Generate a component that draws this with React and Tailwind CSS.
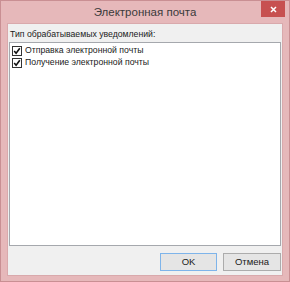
import React from "react";

function Check() {
  return (
    <span className="w-[10px] h-[10px] border border-[#333] bg-white flex items-center justify-center shrink-0">
      <svg width="8" height="8" viewBox="0 0 8 8">
        <path d="M1.2 4 L3.1 6.2 L6.8 1.3" fill="none" stroke="#111" strokeWidth="1.6" />
      </svg>
    </span>
  );
}

export default function App() {
  const items = ["Отправка электронной почты", "Получение электронной почты"];

  return (
    <div
      className="w-[290px] h-[282px] bg-[#e6b8ba] border border-[#c98f93] flex flex-col text-[#1a1a1a]"
      style={{ fontFamily: "'Liberation Sans', Arial, sans-serif" }}
    >
      {/* title bar */}
      <div className="h-[22px] relative flex items-center justify-center">
        <span className="text-[11.5px] text-[#3a3a3a] mt-[1px]">Электронная почта</span>
        <button className="absolute right-[4px] top-0 w-[24px] h-[16px] bg-[#c75050] flex items-center justify-center">
          <svg width="7" height="7" viewBox="0 0 7 7">
            <path d="M1 1 L6 6 M6 1 L1 6" stroke="#fff" strokeWidth="1.5" />
          </svg>
        </button>
      </div>

      {/* client */}
      <div className="flex-1 mx-[6px] mb-[5px] bg-[#f0f0f0] border border-[#d9a9ac] flex flex-col pl-[1px] pr-[1px]">
        <div className="text-[8.7px] mt-[5px] mb-[3px] ml-[1px] leading-[10px]">
          Тип обрабатываемых уведомлений:
        </div>
        <div className="h-[204px] bg-white border border-[#a5a8ad] pt-[3px] pl-[2px] flex flex-col gap-[2px]">
          {items.map((t) => (
            <div key={t} className="flex items-center gap-[3px] h-[10px] text-[8.7px]">
              <Check />
              <span>{t}</span>
            </div>
          ))}
        </div>
        <div className="flex justify-end gap-[6px] mt-[7px]">
          <button className="w-[57px] h-[18px] bg-[#e5e5e5] border border-[#7eb4ea] text-[9.5px]">
            OK
          </button>
          <button className="w-[58px] h-[18px] bg-[#e5e5e5] border border-[#acacac] text-[9.5px]">
            Отмена
          </button>
        </div>
      </div>
    </div>
  );
}
